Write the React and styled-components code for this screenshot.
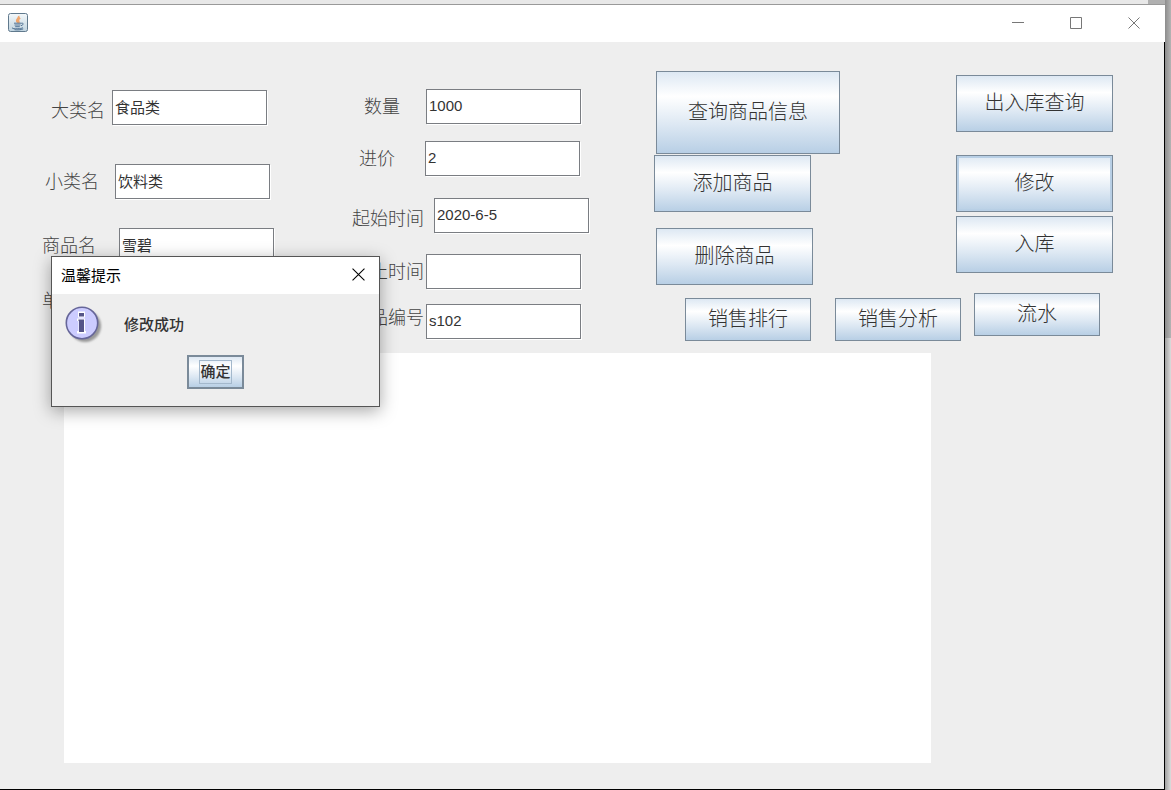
import React, { useState } from 'react';
import styled, { createGlobalStyle } from 'styled-components';

const GlobalStyle = createGlobalStyle`
    * {
        box-sizing: border-box;
    }

    body {
        margin: 0;
        font-family: "Liberation Sans", "Noto Sans CJK SC", sans-serif;
        color: #333;
    }
`;

const Desktop = styled.div`
    display: flex;
    min-height: 100vh;
    padding: 4px 6px 0 0;
    background:
        linear-gradient(#e8e8e8, #e8e8e8) left top / calc(100% - 23px) 4px no-repeat,
        linear-gradient(90deg, #8c8c8c, #b4b4b4) right top / 6px 338px no-repeat,
        linear-gradient(90deg, #a0a0a0, #dcdcdc) right bottom / 6px 100% no-repeat,
        #b0b0b0;
`;

const Window = styled.main`
    position: relative;
    flex: 1;
    display: flex;
    flex-direction: column;
    border-top: 1px solid #999;
`;

const TitleBar = styled.header`
    display: flex;
    align-items: center;
    height: 37px;
    padding: 0 2px 2px 8px;
    background-color: #fff;
`;

const WindowControls = styled.div`
    display: flex;
    margin-left: auto;
`;

const ControlButton = styled.button`
    display: flex;
    align-items: center;
    justify-content: center;
    width: ${({ $width }) => $width || 58}px;
    height: 34px;
    padding: 0;
    border: none;
    background: none;
`;

const Content = styled.div`
    flex: 1;
    display: flex;
    flex-direction: column;
    border-right: 1px solid #000;
    border-bottom: 1px solid #000;
    background-color: #eee;
`;

const FormArea = styled.form`
    display: grid;
    grid-template-columns: 310px 302px 302px 1fr;
    height: 311px;
    padding-left: 42px;
`;

const Column = styled.div`
    display: flex;
    flex-direction: column;
    align-items: flex-start;
`;

const FieldRow = styled.div`
    display: flex;
    align-items: ${({ $align }) => $align || 'center'};
    gap: ${({ $gap }) => $gap}px;
    margin-top: ${({ $space }) => $space}px;
    margin-left: ${({ $indent }) => $indent || 0}px;
`;

const Label = styled.label`
    font-size: 18px;
    font-weight: 300;
    line-height: 28px;
    white-space: nowrap;
    color: #444;
`;

const Input = styled.input`
    width: 155px;
    height: 35px;
    padding: 0 2px 2px;
    border: 1px solid #7a7d82;
    border-radius: 0;
    box-shadow: 1px 1px 0 #fff;
    background-color: #fff;
    font-family: inherit;
    font-size: 15px;
    color: #333;
    outline: none;
`;

const ButtonRow = styled.div`
    display: flex;
    gap: 24px;
    margin-top: ${({ $space }) => $space}px;
    margin-left: 31px;
`;

const sizes = {
    large: 'width: 184px; height: 83px;',
    medium: 'width: 157px; height: 57px;',
    small: 'width: 126px; height: 43px;',
};

const MetalButton = styled.button`
    flex-shrink: 0;
    ${({ $size }) => sizes[$size]}
    margin: ${({ $space }) => $space || 0}px 0 0 ${({ $indent }) => $indent || 0}px;
    padding: 0 0 1px;
    border: 1px solid #7a8a99;
    background: linear-gradient(#dde8f3 0%, #fff 30%, #dde8f3 65%, #b8cfe5 100%);
    box-shadow: ${({ $focused }) => ($focused ? 'inset 0 0 0 2px #b8cfe5' : 'none')};
    font-family: inherit;
    font-size: 20px;
    font-weight: 300;
    line-height: 28px;
    color: #333;
`;

const Output = styled.textarea`
    flex: 1;
    min-height: 410px;
    margin: 0 233px 26px 64px;
    padding: 4px;
    border: none;
    background-color: #fff;
    font-family: inherit;
    font-size: 15px;
    resize: none;
    outline: none;
`;

const Dialog = styled.section`
    position: absolute;
    top: 251px;
    left: 51px;
    width: 329px;
    height: 151px;
    border: 1px solid #555;
    background-color: #eee;
    box-shadow: 0 4px 16px rgba(0, 0, 0, 0.35);
`;

const DialogHeader = styled.header`
    display: flex;
    align-items: center;
    justify-content: space-between;
    height: 37px;
    padding: 0 0 2px 9px;
    background-color: #fff;
`;

const DialogTitle = styled.h2`
    margin: 0;
    font-size: 15px;
    font-weight: 400;
    color: #000;
`;

const DialogBody = styled.div`
    display: flex;
    align-items: center;
    gap: 20px;
    height: 61px;
    padding-left: 12px;
`;

const Message = styled.p`
    margin: 0;
    padding-bottom: 2px;
    font-size: 15px;
    font-weight: 500;
`;

const DialogFooter = styled.div`
    display: flex;
    justify-content: center;
`;

const ConfirmButton = styled.button`
    display: flex;
    align-items: center;
    justify-content: center;
    width: 57px;
    height: 34px;
    padding: 0;
    border: 2px solid #7a8a99;
    background: linear-gradient(#dde8f3 0%, #fff 30%, #dde8f3 65%, #b8cfe5 100%);
    font-family: inherit;
    font-size: 15px;
    font-weight: 500;
    color: #333;
`;

const FocusBox = styled.span`
    border: 1px solid #a3b8cc;
    line-height: 22px;
`;

function JavaIcon() {
    return (
        <svg width="20" height="20" viewBox="0 0 20 20" fill="none">
            <defs>
                <linearGradient id="javaBg" x1="0" y1="0" x2="0" y2="1">
                    <stop offset="0" stopColor="#f4f8fa" />
                    <stop offset="1" stopColor="#bfd3df" />
                </linearGradient>
            </defs>
            <rect x="0.5" y="0.5" width="19" height="18" rx="2" fill="url(#javaBg)" stroke="#60798d" />
            <path d="M10.5 3c1.5 2-2.7 3.1-1.7 5.2.3.7 1.1 1 1.3 1.8M12.2 5c-2.3 1.5-2.2 2.2-1.4 3.4.5.7 0 1.2-.5 1.7" stroke="#efa56c" strokeWidth="1.8" />
            <path d="M6 10.2h7.2M6.5 12h6M7.2 13.7h4.6M13.2 10.3c3-.7 2.3 1.8-.2 2.4" stroke="#527394" />
            <path d="M4.3 14.7c-1.7 1.3 8 1.6 10.6 0M6.5 16.7c3.1.4 6.2.2 8.7-.8" stroke="#527394" />
        </svg>
    );
}

function CloseIcon({ size = 12, color = '#777' }) {
    return (
        <svg width={size} height={size} viewBox="0 0 12 12" stroke={color}>
            <path d="M0.5 0.5l11 11M11.5 0.5l-11 11" />
        </svg>
    );
}

function InfoIcon() {
    return (
        <svg width="40" height="40" viewBox="0 0 40 40">
            <defs>
                <filter id="iconShadow" x="-20%" y="-20%" width="150%" height="150%">
                    <feGaussianBlur stdDeviation="1.3" />
                </filter>
            </defs>
            <circle cx="21" cy="21" r="16" fill="#999" filter="url(#iconShadow)" />
            <circle cx="18" cy="18" r="15.7" fill="#ccccff" stroke="#666699" strokeWidth="1.6" />
            <path d="M14 6.5h7v6h-7zM13 13.5h8v12.5h1v2.5h-9V26h1.5V16H13z" fill="#fff" />
            <path d="M15 8h5v3.5h-5zM14.5 14.5H20V27h-5V16h-.5z" fill="#555588" />
        </svg>
    );
}

const categoryFields = [
    { name: 'category', label: '大类名', space: 48, indent: 9, gap: 7, align: 'flex-end' },
    { name: 'subcategory', label: '小类名', space: 39, indent: 3, gap: 16 },
    { name: 'product', label: '商品名', space: 29, indent: 0, gap: 23 },
    { name: 'unit', label: '单位', space: 20, indent: 0, gap: 40 },
];

const stockFields = [
    { name: 'quantity', label: '数量', space: 47, indent: 12, gap: 26 },
    { name: 'price', label: '进价', space: 17, indent: 7, gap: 30 },
    { name: 'start', label: '起始时间', space: 22, indent: 0, gap: 10, align: 'flex-end' },
    { name: 'end', label: '终止时间', space: 21, indent: 0, gap: 2 },
    { name: 'code', label: '商品编号', space: 15, indent: 0, gap: 2, align: 'flex-start' },
];

export default function App() {
    const [fields, setFields] = useState({
        category: '食品类',
        subcategory: '饮料类',
        product: '雪碧',
        unit: '',
        quantity: '1000',
        price: '2',
        start: '2020-6-5',
        end: '',
        code: 's102',
    });
    const [showDialog, setShowDialog] = useState(true);

    function handleChange(e) {
        const { name, value } = e.target;
        setFields({ ...fields, [name]: value });
    }

    function renderField({ name, label, space, indent, gap, align }) {
        return (
            <FieldRow key={name} $space={space} $indent={indent} $gap={gap} $align={align}>
                <Label htmlFor={name}>{label}</Label>
                <Input id={name} name={name} type="text" value={fields[name]} onChange={handleChange} />
            </FieldRow>
        );
    }

    return (
        <Desktop>
            <GlobalStyle />
            <Window>
                <TitleBar>
                    <JavaIcon />
                    <WindowControls>
                        <ControlButton type="button" aria-label="最小化">
                            <svg width="12" height="12" stroke="#777"><path d="M0 5.5h12" /></svg>
                        </ControlButton>
                        <ControlButton type="button" aria-label="最大化">
                            <svg width="12" height="12" stroke="#777" fill="none"><path d="M0.5 0.5h11v11h-11z" /></svg>
                        </ControlButton>
                        <ControlButton type="button" aria-label="关闭"><CloseIcon /></ControlButton>
                    </WindowControls>
                </TitleBar>

                <Content>
                    <FormArea>
                        <Column>{categoryFields.map(renderField)}</Column>
                        <Column>{stockFields.map(renderField)}</Column>
                        <Column>
                            <MetalButton type="button" $size="large" $space={29} $indent={2}>查询商品信息</MetalButton>
                            <MetalButton type="button" $size="medium" $space={1}>添加商品</MetalButton>
                            <MetalButton type="button" $size="medium" $space={16} $indent={2}>删除商品</MetalButton>
                            <ButtonRow $space={13}>
                                <MetalButton type="button" $size="small">销售排行</MetalButton>
                                <MetalButton type="button" $size="small">销售分析</MetalButton>
                            </ButtonRow>
                        </Column>
                        <Column>
                            <MetalButton type="button" $size="medium" $space={33}>出入库查询</MetalButton>
                            <MetalButton type="button" $size="medium" $space={23} $focused>修改</MetalButton>
                            <MetalButton type="button" $size="medium" $space={4}>入库</MetalButton>
                            <MetalButton type="button" $size="small" $space={20} $indent={18}>流水</MetalButton>
                        </Column>
                    </FormArea>
                    <Output aria-label="结果" />
                </Content>

                {showDialog && (
                    <Dialog role="dialog" aria-labelledby="dialog-title">
                        <DialogHeader>
                            <DialogTitle id="dialog-title">温馨提示</DialogTitle>
                            <ControlButton type="button" $width={42} aria-label="关闭" onClick={() => setShowDialog(false)}>
                                <CloseIcon size={13} color="#000" />
                            </ControlButton>
                        </DialogHeader>
                        <DialogBody>
                            <InfoIcon />
                            <Message>修改成功</Message>
                        </DialogBody>
                        <DialogFooter>
                            <ConfirmButton type="button" onClick={() => setShowDialog(false)}>
                                <FocusBox>确定</FocusBox>
                            </ConfirmButton>
                        </DialogFooter>
                    </Dialog>
                )}
            </Window>
        </Desktop>
    );
}
